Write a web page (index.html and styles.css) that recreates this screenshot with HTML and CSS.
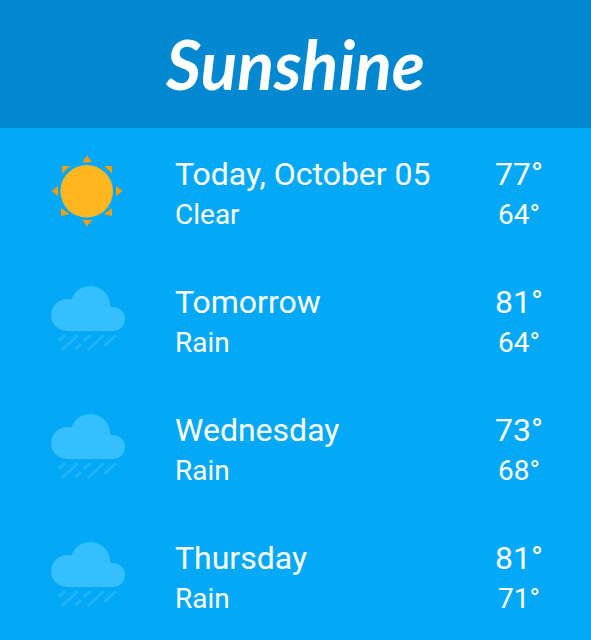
FILE: index.html
```html
<!DOCTYPE html>
<html lang="en">
<head>
<meta charset="utf-8">
<meta name="viewport" content="width=device-width, initial-scale=1">
<title>Sunshine</title>
<link rel="stylesheet" href="styles.css">
</head>
<body>
<svg class="symbols" aria-hidden="true">
  <symbol id="sun" viewBox="0 0 76 76">
    <circle class="sun-disc" cx="36.700" cy="39.300" r="26.300"/>
    <path class="sun-rays" d="M37 3.500L42 10.300H32.300ZM37 74.500L42 68H32.300ZM1.700 39L8 34V44.300ZM72.500 39L66 34V44.300ZM12 14H20L12.300 21.500ZM62.300 14H54.300L62 21.500ZM11 64V56L19.500 62ZM62 64V56L54 62Z"/>
  </symbol>
  <symbol id="rain" viewBox="0 0 76 76">
    <g class="cloud">
      <circle cx="17" cy="35" r="16"/>
      <circle cx="40.300" cy="25.700" r="19.800"/>
      <circle cx="63" cy="39" r="12"/>
      <path d="M17 30H63V51H17Z"/>
    </g>
    <path class="drops" d="M9.500 60L14 56M13 69L27 56M26.500 68L30 65M34.500 60L39.500 56M39 69L53 56M55.500 65L65 56"/>
  </symbol>
</svg>
<header class="header"><h1 class="logo">Sunshine</h1></header>
<main>
  <ul class="forecast">
    <li class="day">
      <svg class="icon" role="img" aria-label="Clear"><use href="#sun"/></svg>
      <div class="details"><span class="primary">Today, October 05</span><span class="secondary">Clear</span></div>
      <div class="temps"><span class="primary">77°</span><span class="secondary">64°</span></div>
    </li>
    <li class="day">
      <svg class="icon" role="img" aria-label="Rain"><use href="#rain"/></svg>
      <div class="details"><span class="primary">Tomorrow</span><span class="secondary">Rain</span></div>
      <div class="temps"><span class="primary">81°</span><span class="secondary">64°</span></div>
    </li>
    <li class="day">
      <svg class="icon" role="img" aria-label="Rain"><use href="#rain"/></svg>
      <div class="details"><span class="primary">Wednesday</span><span class="secondary">Rain</span></div>
      <div class="temps"><span class="primary">73°</span><span class="secondary">68°</span></div>
    </li>
    <li class="day">
      <svg class="icon" role="img" aria-label="Rain"><use href="#rain"/></svg>
      <div class="details"><span class="primary">Thursday</span><span class="secondary">Rain</span></div>
      <div class="temps"><span class="primary">81°</span><span class="secondary">71°</span></div>
    </li>
  </ul>
</main>
</body>
</html>
```
FILE: styles.css
```css
* { box-sizing: border-box; }

body {
  margin: 0;
  background: #03a9f7;
  color: #fff;
  font-family: Roboto, "Liberation Sans", sans-serif;
}

.symbols { display: none; }

.header {
  display: flex;
  justify-content: center;
  padding: 16px;
  background: #0288d1;
}

.logo {
  margin: 0;
  font: italic 700 68px/96px Lato, "Liberation Sans", sans-serif;
}

.forecast {
  margin: 0;
  padding: 0;
  list-style: none;
}

.day {
  display: flex;
  align-items: flex-start;
  padding: 24px 48px 22px 50px;
}

.icon {
  flex: none;
  width: 76px;
  height: 76px;
  margin-right: 49px;
}

.details {
  flex: 1;
  display: flex;
  flex-direction: column;
}

.temps {
  display: flex;
  flex-direction: column;
  align-items: center;
}

.primary { font-size: 32px; line-height: 44px; }
.secondary { font-size: 28px; line-height: 38px; }

.sun-disc { fill: #ffb71f; }
.sun-rays { fill: #f79d0c; }
.cloud { fill: #35bfff; }

.drops {
  fill: none;
  stroke: #1fb5fc;
  stroke-width: 3;
  stroke-linecap: round;
}
```
